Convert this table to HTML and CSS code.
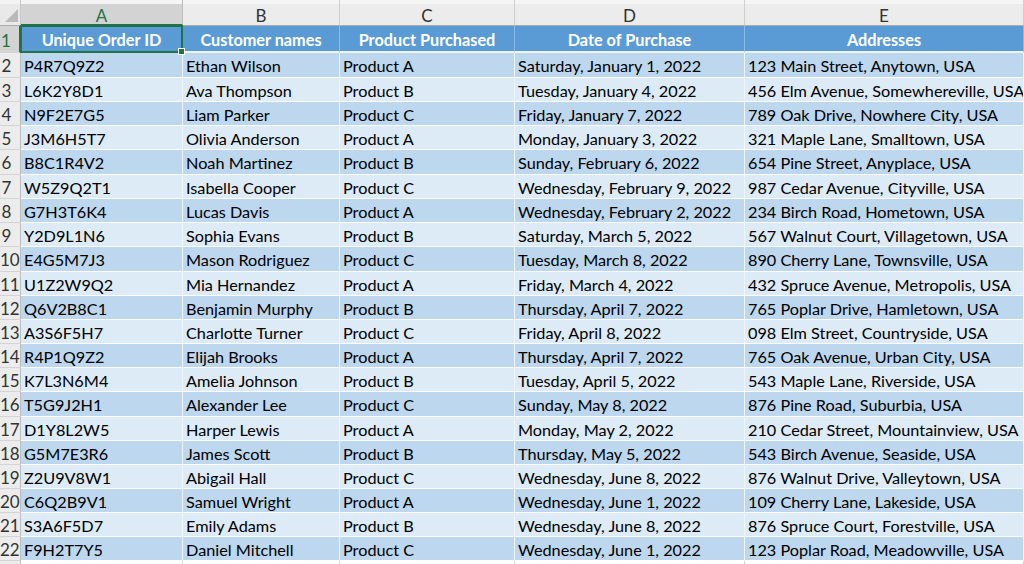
FILE: index.html
```html
<!DOCTYPE html>
<html lang="en">
<head>
<meta charset="utf-8">
<title>Orders</title>
<link rel="stylesheet" href="styles.css">
</head>
<body>
<div class="sheet">
  <div class="corner"><span class="tri"></span></div>
  <div class="colhdr sel">A</div>
  <div class="colhdr">B</div>
  <div class="colhdr">C</div>
  <div class="colhdr">D</div>
  <div class="colhdr">E</div>

  <div class="rowhdr sel">1</div>
  <div class="th active">Unique Order ID</div>
  <div class="th">Customer names</div>
  <div class="th">Product Purchased</div>
  <div class="th">Date of Purchase</div>
  <div class="th">Addresses</div>

  <div class="rowhdr">2</div><div class="td d">P4R7Q9Z2</div><div class="td d">Ethan Wilson</div><div class="td d">Product A</div><div class="td d">Saturday, January 1, 2022</div><div class="td d">123 Main Street, Anytown, USA</div>
  <div class="rowhdr">3</div><div class="td l">L6K2Y8D1</div><div class="td l">Ava Thompson</div><div class="td l">Product B</div><div class="td l">Tuesday, January 4, 2022</div><div class="td l">456 Elm Avenue, Somewhereville, USA</div>
  <div class="rowhdr">4</div><div class="td d">N9F2E7G5</div><div class="td d">Liam Parker</div><div class="td d">Product C</div><div class="td d">Friday, January 7, 2022</div><div class="td d">789 Oak Drive, Nowhere City, USA</div>
  <div class="rowhdr">5</div><div class="td l">J3M6H5T7</div><div class="td l">Olivia Anderson</div><div class="td l">Product A</div><div class="td l">Monday, January 3, 2022</div><div class="td l">321 Maple Lane, Smalltown, USA</div>
  <div class="rowhdr">6</div><div class="td d">B8C1R4V2</div><div class="td d">Noah Martinez</div><div class="td d">Product B</div><div class="td d">Sunday, February 6, 2022</div><div class="td d">654 Pine Street, Anyplace, USA</div>
  <div class="rowhdr">7</div><div class="td l">W5Z9Q2T1</div><div class="td l">Isabella Cooper</div><div class="td l">Product C</div><div class="td l">Wednesday, February 9, 2022</div><div class="td l">987 Cedar Avenue, Cityville, USA</div>
  <div class="rowhdr">8</div><div class="td d">G7H3T6K4</div><div class="td d">Lucas Davis</div><div class="td d">Product A</div><div class="td d">Wednesday, February 2, 2022</div><div class="td d">234 Birch Road, Hometown, USA</div>
  <div class="rowhdr">9</div><div class="td l">Y2D9L1N6</div><div class="td l">Sophia Evans</div><div class="td l">Product B</div><div class="td l">Saturday, March 5, 2022</div><div class="td l">567 Walnut Court, Villagetown, USA</div>
  <div class="rowhdr">10</div><div class="td d">E4G5M7J3</div><div class="td d">Mason Rodriguez</div><div class="td d">Product C</div><div class="td d">Tuesday, March 8, 2022</div><div class="td d">890 Cherry Lane, Townsville, USA</div>
  <div class="rowhdr">11</div><div class="td l">U1Z2W9Q2</div><div class="td l">Mia Hernandez</div><div class="td l">Product A</div><div class="td l">Friday, March 4, 2022</div><div class="td l">432 Spruce Avenue, Metropolis, USA</div>
  <div class="rowhdr">12</div><div class="td d">Q6V2B8C1</div><div class="td d">Benjamin Murphy</div><div class="td d">Product B</div><div class="td d">Thursday, April 7, 2022</div><div class="td d">765 Poplar Drive, Hamletown, USA</div>
  <div class="rowhdr">13</div><div class="td l">A3S6F5H7</div><div class="td l">Charlotte Turner</div><div class="td l">Product C</div><div class="td l">Friday, April 8, 2022</div><div class="td l">098 Elm Street, Countryside, USA</div>
  <div class="rowhdr">14</div><div class="td d">R4P1Q9Z2</div><div class="td d">Elijah Brooks</div><div class="td d">Product A</div><div class="td d">Thursday, April 7, 2022</div><div class="td d">765 Oak Avenue, Urban City, USA</div>
  <div class="rowhdr">15</div><div class="td l">K7L3N6M4</div><div class="td l">Amelia Johnson</div><div class="td l">Product B</div><div class="td l">Tuesday, April 5, 2022</div><div class="td l">543 Maple Lane, Riverside, USA</div>
  <div class="rowhdr">16</div><div class="td d">T5G9J2H1</div><div class="td d">Alexander Lee</div><div class="td d">Product C</div><div class="td d">Sunday, May 8, 2022</div><div class="td d">876 Pine Road, Suburbia, USA</div>
  <div class="rowhdr">17</div><div class="td l">D1Y8L2W5</div><div class="td l">Harper Lewis</div><div class="td l">Product A</div><div class="td l">Monday, May 2, 2022</div><div class="td l">210 Cedar Street, Mountainview, USA</div>
  <div class="rowhdr">18</div><div class="td d">G5M7E3R6</div><div class="td d">James Scott</div><div class="td d">Product B</div><div class="td d">Thursday, May 5, 2022</div><div class="td d">543 Birch Avenue, Seaside, USA</div>
  <div class="rowhdr">19</div><div class="td l">Z2U9V8W1</div><div class="td l">Abigail Hall</div><div class="td l">Product C</div><div class="td l">Wednesday, June 8, 2022</div><div class="td l">876 Walnut Drive, Valleytown, USA</div>
  <div class="rowhdr">20</div><div class="td d">C6Q2B9V1</div><div class="td d">Samuel Wright</div><div class="td d">Product A</div><div class="td d">Wednesday, June 1, 2022</div><div class="td d">109 Cherry Lane, Lakeside, USA</div>
  <div class="rowhdr">21</div><div class="td l">S3A6F5D7</div><div class="td l">Emily Adams</div><div class="td l">Product B</div><div class="td l">Wednesday, June 8, 2022</div><div class="td l">876 Spruce Court, Forestville, USA</div>
  <div class="rowhdr">22</div><div class="td d">F9H2T7Y5</div><div class="td d">Daniel Mitchell</div><div class="td d">Product C</div><div class="td d">Wednesday, June 1, 2022</div><div class="td d">123 Poplar Road, Meadowville, USA</div>
  <div class="rowhdr"></div><div class="td e"></div><div class="td e"></div><div class="td e"></div><div class="td e"></div><div class="td e"></div>
</div>
</body>
</html>
```
FILE: styles.css
```css
html, body {
  margin: 0;
  padding: 0;
  background: #ffffff;
  overflow: hidden;
}
body {
  width: 1024px;
  height: 564px;
  font-family: Lato, "Open Sans", "Liberation Sans", sans-serif;
  font-size: 16.25px;
  color: #000;
}
.sheet {
  display: grid;
  grid-template-columns: 21px 162px 157px 175px 230px 1fr;
  grid-template-rows: 26px 27px 25px 24px 24px 24px 25px 24px 24px 24px 25px 24px 24px 24px 24px 24px 25px 24px 24px 24px 24px 24px 24px 24px;
  width: 1024px;
}
.corner {
  background: #e9e9e9;
  border-right: 1px solid #c8c8c8;
  border-bottom: 1px solid #ababab;
  position: relative;
  box-shadow: inset 0 4px 0 #f3f3f3;
}
.tri {
  position: absolute;
  right: 2px;
  bottom: 3px;
  width: 0;
  height: 0;
  border-left: 13px solid transparent;
  border-bottom: 13px solid #b9b9b9;
}
.colhdr {
  padding-top: 5px;
  text-align: center;
  background: #ececec;
  box-shadow: inset 0 4px 0 #f5f5f5;
  border-right: 1px solid #d0d0d0;
  border-bottom: 1px solid #ababab;
  color: #333;
  font-size: 17px;
}
.colhdr.sel {
  background: #d3d3d3;
  color: #217346;
  border-bottom: 2px solid #217346;
  border-right-color: #bdbdbd;
}
.rowhdr {
  padding: 3px 7px 0 0;
  text-align: center;
  background: #ececec;
  border-right: 1px solid #bdbdbd;
  border-bottom: 1px solid #d4d4d4;
  color: #333;
  font-size: 17px;
  line-height: 20px;
  white-space: nowrap;
}
.rowhdr.sel {
  padding-top: 5px;
  background: #d3d3d3;
  color: #217346;
  border-right: 2px solid #217346;
}
.th {
  padding-top: 4px;
  text-align: center;
  background: #5b9bd5;
  color: #ffffff;
  font-weight: 700;
  line-height: 20px;
  border-right: 1px solid #8cbbe6;
  border-bottom: 2px solid #eef5fb;
  white-space: nowrap;
}
.th.active {
  position: relative;
}
.th.active::after {
  content: "";
  position: absolute;
  left: -1px;
  top: -1px;
  right: -1px;
  bottom: -2px;
  border: 2px solid #217346;
}
.th.active::before {
  content: "";
  position: absolute;
  right: -3px;
  bottom: -4px;
  width: 5px;
  height: 5px;
  background: #217346;
  border: 1px solid #ffffff;
  z-index: 2;
}
.td {
  padding: 3px 0 0 3px;
  line-height: 20px;
  border-right: 1px solid #eef5fb;
  border-bottom: 1px solid #ffffff;
  white-space: nowrap;
  overflow: hidden;
}
.td.d {
  background: #bdd7ee;
}
.td.l {
  background: #ddebf7;
}
.td.e {
  background: #ffffff;
  border-right-color: #d4d4d4;
}
```
